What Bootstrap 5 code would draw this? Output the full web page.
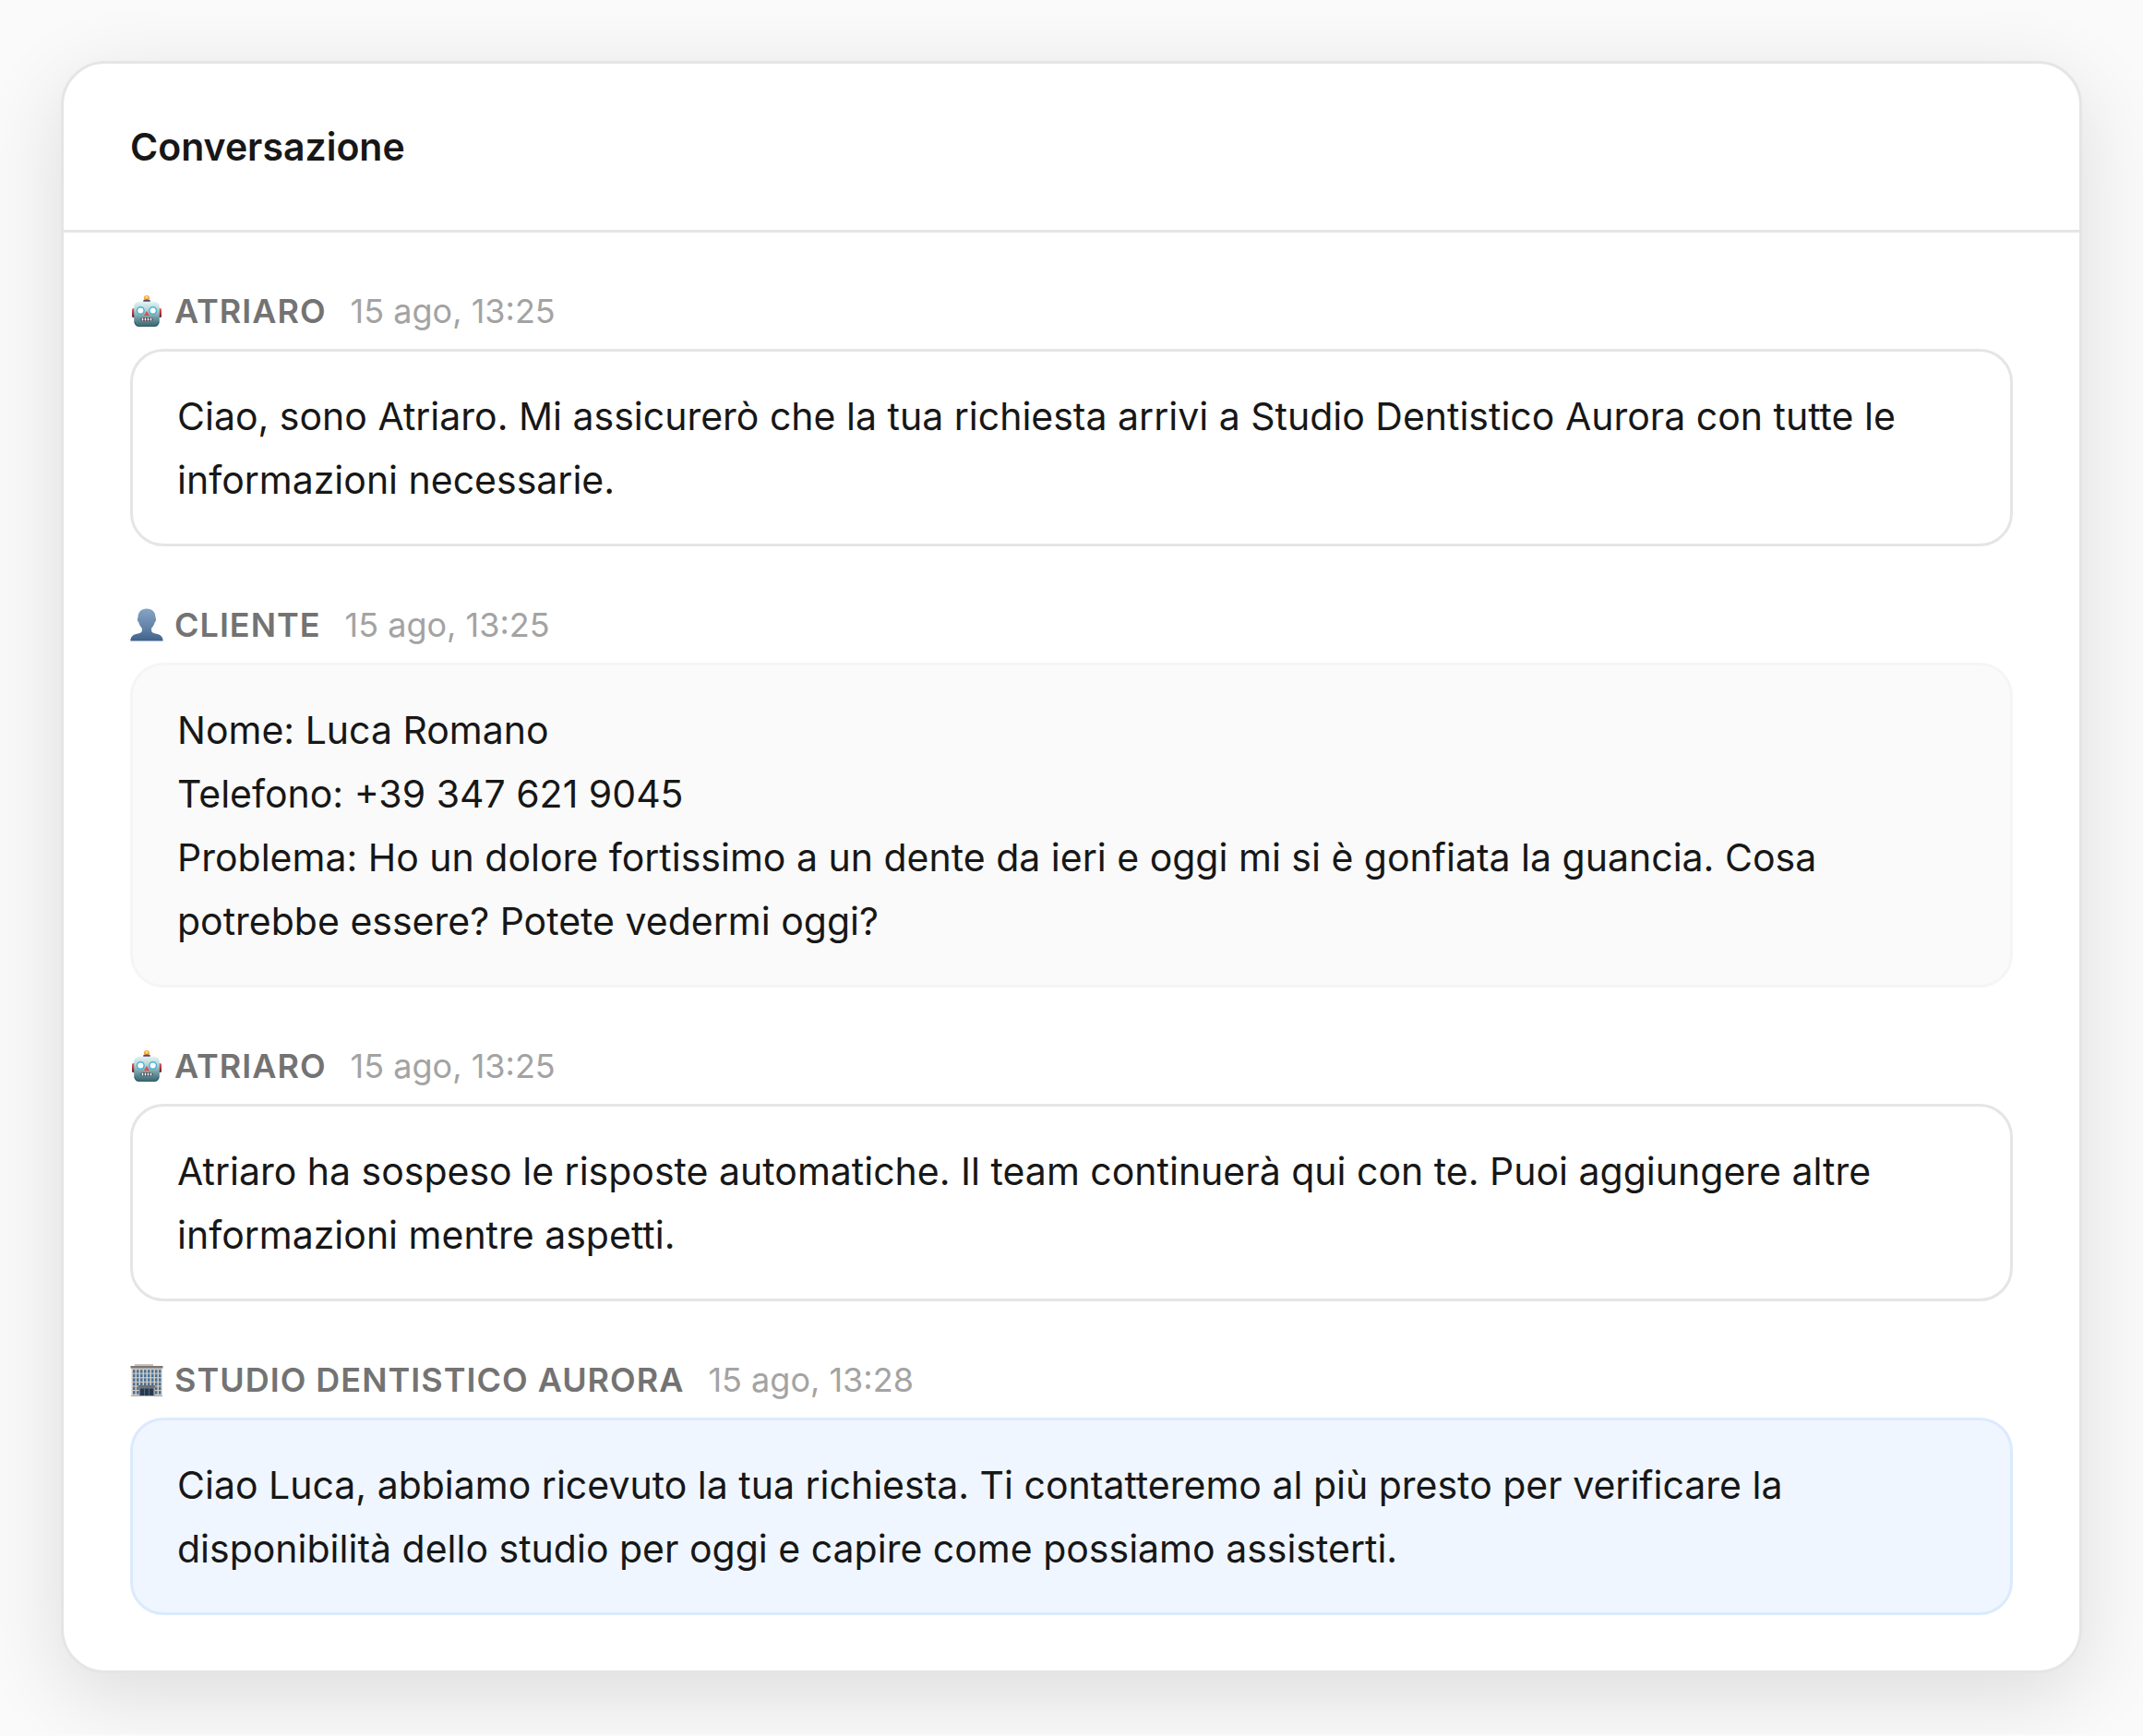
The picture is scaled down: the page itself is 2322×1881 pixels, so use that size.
<!DOCTYPE html>
<html lang="it">
<head>
<meta charset="utf-8">
<meta name="viewport" content="width=device-width, initial-scale=1">
<title>Conversazione</title>
<link rel="stylesheet" href="https://cdn.jsdelivr.net/npm/bootstrap@5.3.0/dist/css/bootstrap.min.css">
<style>
body{background:#fafafa;color:#171717;font-family:Inter,"Liberation Sans",sans-serif;font-size:41px;line-height:69px;padding:66px}
.chat-card{border:3px solid #e5e5e5;border-radius:48px;box-shadow:0 24px 90px rgba(0,0,0,.12);color:inherit}
.chat-head{background:#fff;border-bottom:3px solid #e5e5e5;padding:60px 72px}
.chat-title{font-size:41px;line-height:60px;font-weight:600}
.chat-body{padding:61px 72px 60px;gap:61px}
.chat-meta{font-size:36px;line-height:48px;gap:26px;margin-bottom:17px}
.chat-author{color:#737373;font-weight:600;letter-spacing:1px;gap:12px}
.chat-time{color:#a3a3a3}
.chat-icon{width:36px;height:36px;flex:none}
.bubble{border:3px solid #e5e5e5;border-radius:36px;padding:36px 48px 34px;background:#fff;white-space:pre-line}
.bubble-client{background:#fafafa;border-color:#f5f5f5}
.bubble-studio{background:#eff6ff;border-color:#dbeafe}
</style>
</head>
<body>
<svg width="0" height="0" class="position-absolute" aria-hidden="true">
  <defs>
    <linearGradient id="gFace" x1="0" y1="0" x2="0" y2="1"><stop offset="0" stop-color="#e2f4f3"/><stop offset=".3" stop-color="#bcd7d9"/><stop offset=".65" stop-color="#7099a2"/><stop offset="1" stop-color="#336470"/></linearGradient>
    <linearGradient id="gEar" x1="0" y1="0" x2="0" y2="1"><stop offset="0" stop-color="#ee5a5c"/><stop offset="1" stop-color="#5d1f28"/></linearGradient>
    <linearGradient id="gMan" x1="0" y1="0" x2="0" y2="1"><stop offset="0" stop-color="#86a4c4"/><stop offset=".6" stop-color="#6182a8"/><stop offset="1" stop-color="#3f618b"/></linearGradient>
    <linearGradient id="gWin" x1="0" y1="0" x2="0" y2="1"><stop offset="0" stop-color="#5d83a3"/><stop offset="1" stop-color="#3c6287"/></linearGradient>
    <symbol id="robot" viewBox="0 0 36 36">
      <rect x="2" y="15" width="4" height="10" rx="1.5" fill="url(#gEar)"/><rect x="30" y="15" width="4" height="10" rx="1.5" fill="url(#gEar)"/>
      <circle cx="18" cy="4" r="3.1" fill="#f5a63a"/><circle cx="18" cy="3" r="1.5" fill="#ffdc78"/><ellipse cx="18" cy="7" rx="4" ry="1.6" fill="#5b4274"/>
      <rect x="4.2" y="7.8" width="27.6" height="27" rx="5.5" fill="url(#gFace)"/>
      <path d="M5 30q1 4.600 5 4.600h16q4 0 5-4.600" fill="none" stroke="#28525d" stroke-width=".8"/>
      <circle cx="11.300" cy="17.500" r="3.800" fill="#fff" stroke="#47b5d4" stroke-width="1.500"/><circle cx="24.700" cy="17.500" r="3.800" fill="#fff" stroke="#47b5d4" stroke-width="1.500"/>
      <path d="M18 18l3 5h-6z" fill="#dc5050"/>
      <rect x="11.500" y="25" width="13" height="4" rx="2" fill="#3c3038"/>
      <path d="M13.500 25.500v3M16.500 25.500v3M19.500 25.500v3M22.500 25.500v3" stroke="#fff" stroke-width="1.700"/>
    </symbol>
    <symbol id="person" viewBox="0 0 36 36">
      <path d="M18 .5c6 0 9.500 3.800 9.500 9.200 0 1 .7 1.100.6 2.700-.1 1.500-.8 2-1.300 2.600-.7 3-2 5-3.700 6.700v2.500c0 2 2 2.700 5.500 3.500 4.800 1.200 7 3.500 7 7.800H.4c0-4.300 2.200-6.600 7-7.800 3.500-.8 5.500-1.500 5.500-3.500v-2.500c-1.700-1.700-3-3.700-3.700-6.700-.5-.6-1.200-1.100-1.300-2.600-.1-1.600.6-1.700.6-2.700C8.500 4.300 12 .5 18 .5z" fill="url(#gMan)"/>
    </symbol>
    <symbol id="building" viewBox="0 0 36 36">
      <rect x="5" y="1" width="20" height="3" fill="#c6c2bd"/>
      <rect x="1.500" y="4" width="33" height="31.500" fill="#d0cbc5"/><rect x=".5" y="3" width="35" height="2.500" fill="#7d7774"/>
      <g fill="url(#gWin)" id="winrow"><rect x="3" y="7" width="2.500" height="3.500"/><rect x="7" y="7" width="2.500" height="3.500"/><rect x="11" y="7" width="2.500" height="3.500"/><rect x="15" y="7" width="2.500" height="3.500"/><rect x="19" y="7" width="2.500" height="3.500"/><rect x="23" y="7" width="2.500" height="3.500"/><rect x="27" y="7" width="2.500" height="3.500"/><rect x="31" y="7" width="2.500" height="3.500"/></g>
      <use href="#winrow" y="4.600"/><use href="#winrow" y="9.200"/><use href="#winrow" y="13.800"/><use href="#winrow" y="18.400"/><use href="#winrow" y="23"/>
      <rect x="9.500" y="25" width="17" height="10.500" fill="#6f7a85"/><rect x="11" y="27.500" width="14" height="8" fill="#26384f"/>
      <path d="M15.500 27.500v8M20.500 27.500v8" stroke="#667989" stroke-width=".8"/><rect x="9" y="24" width="18" height="2.500" fill="#746e6c"/>
      <path d="M.8 35.500h34.400" stroke="#aaa6a2"/>
    </symbol>
  </defs>
</svg>
<main class="card chat-card">
  <header class="chat-head card-header rounded-0 bg-transparent"><h1 class="chat-title mb-0">Conversazione</h1></header>
  <div class="chat-body d-flex flex-column">
    <article>
      <div class="chat-meta d-flex align-items-center"><span class="chat-author d-flex align-items-center"><svg class="chat-icon" aria-hidden="true"><use href="#robot"/></svg>ATRIARO</span><time class="chat-time">15 ago, 13:25</time></div>
      <div class="bubble">Ciao, sono Atriaro. Mi assicurerò che la tua richiesta arrivi a Studio Dentistico Aurora con tutte le informazioni necessarie.</div>
    </article>
    <article>
      <div class="chat-meta d-flex align-items-center"><span class="chat-author d-flex align-items-center"><svg class="chat-icon" aria-hidden="true"><use href="#person"/></svg>CLIENTE</span><time class="chat-time">15 ago, 13:25</time></div>
      <div class="bubble bubble-client">Nome: Luca Romano
Telefono: +39 347 621 9045
Problema: Ho un dolore fortissimo a un dente da ieri e oggi mi si è gonfiata la guancia. Cosa potrebbe essere? Potete vedermi oggi?</div>
    </article>
    <article>
      <div class="chat-meta d-flex align-items-center"><span class="chat-author d-flex align-items-center"><svg class="chat-icon" aria-hidden="true"><use href="#robot"/></svg>ATRIARO</span><time class="chat-time">15 ago, 13:25</time></div>
      <div class="bubble">Atriaro ha sospeso le risposte automatiche. Il team continuerà qui con te. Puoi aggiungere altre informazioni mentre aspetti.</div>
    </article>
    <article>
      <div class="chat-meta d-flex align-items-center"><span class="chat-author d-flex align-items-center"><svg class="chat-icon" aria-hidden="true"><use href="#building"/></svg>STUDIO DENTISTICO AURORA</span><time class="chat-time">15 ago, 13:28</time></div>
      <div class="bubble bubble-studio">Ciao Luca, abbiamo ricevuto la tua richiesta. Ti contatteremo al più presto per verificare la disponibilità dello studio per oggi e capire come possiamo assisterti.</div>
    </article>
  </div>
</main>
<script src="https://cdn.jsdelivr.net/npm/bootstrap@5.3.0/dist/js/bootstrap.bundle.min.js"></script>
</body>
</html>
